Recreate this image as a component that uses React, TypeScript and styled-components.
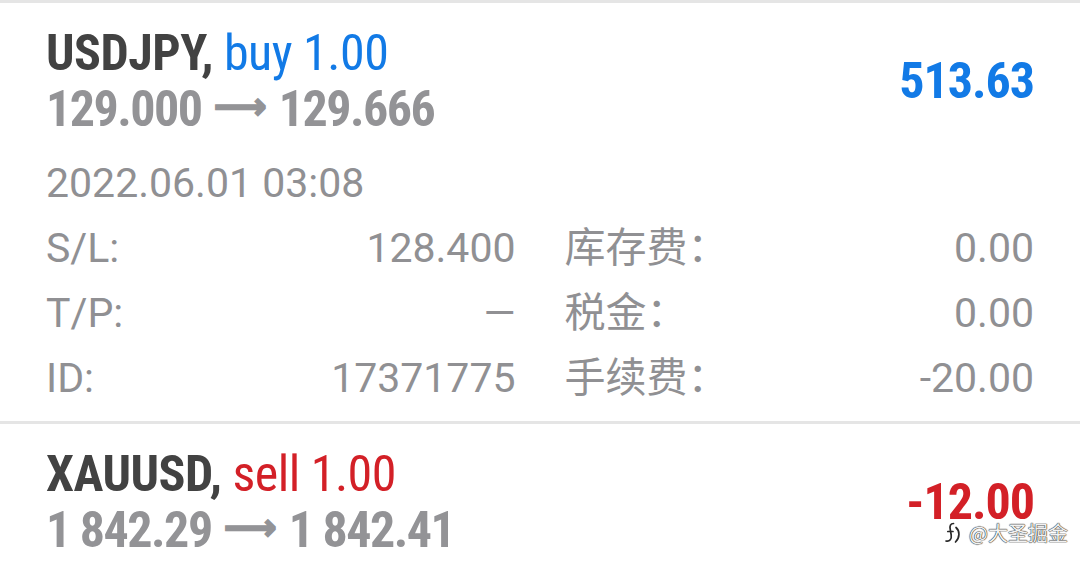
import React from "react";
import styled, { createGlobalStyle } from "styled-components";

const GlobalStyle = createGlobalStyle`
  html, body { margin: 0; padding: 0; background: #ffffff; }
  body { font-family: Roboto, "Noto Sans CJK SC", sans-serif; overflow: hidden; }
`;

const Page = styled.div`
  position: relative;
  width: 1080px;
  height: 570px;
  overflow: hidden;
  background: #ffffff;
`;

const Divider = styled.div`
  height: 3px;
  background: #e5e5e5;
`;

const Card = styled.section`
  padding: 22px 46px 10px 46px;
`;

const Header = styled.div`
  display: flex;
  align-items: center;
  justify-content: space-between;
`;

const HeaderText = styled.div`
  display: flex;
  flex-direction: column;
`;

const Condensed = styled.div`
  font-family: "Roboto Condensed", "Liberation Sans Narrow", Roboto, sans-serif;
  font-weight: 700;
  font-size: 50px;
  line-height: 56px;
  white-space: nowrap;
`;

const Title = styled(Condensed)`
  color: #424242;
  letter-spacing: -0.5px;
`;

const Side = styled.span<{ $sell?: boolean }>`
  font-weight: 400;
  color: ${(p) => (p.$sell ? "#d32027" : "#127ae6")};
`;

const Prices = styled(Condensed)`
  color: #939396;
  letter-spacing: -1.5px;
  display: flex;
  align-items: center;
`;

const Arrow = styled.span`
  font-family: "DejaVu Sans", sans-serif;
  font-weight: 700;
  font-size: 37px;
  letter-spacing: 0;
  margin: 0 12px 0 12px;
  line-height: 56px;
  position: relative;
  top: -2px;
  -webkit-text-stroke: 1.6px #939396;
`;

const Profit = styled(Condensed)<{ $neg?: boolean }>`
  letter-spacing: -1px;
  color: ${(p) => (p.$neg ? "#d32027" : "#127ae6")};
`;

const DateLine = styled.div`
  margin-top: 22px;
  font-size: 41px;
  line-height: 48px;
  color: #909093;
`;

const Details = styled.div`
  display: grid;
  grid-template-columns: 1fr 1fr;
  column-gap: 49px;
  margin-top: 9px;
`;

const Row = styled.div`
  display: flex;
  justify-content: space-between;
  align-items: baseline;
  font-size: 41px;
  line-height: 65px;
  color: #909093;
`;

const Label = styled.span``;
const Value = styled.span``;

const Watermark = styled.div`
  position: absolute;
  right: 12px;
  bottom: 25px;
  display: flex;
  align-items: center;
  gap: 7px;
  font-family: "Noto Sans CJK SC", sans-serif;
  font-size: 20px;
  line-height: 22px;
  color: #f2f2f2;
  text-shadow: 0 0 1px #333, 0 0 1px #333, 0 0 1px #333;
`;

type Detail = [string, string];

const left: Detail[] = [
  ["S/L:", "128.400"],
  ["T/P:", "—"],
  ["ID:", "17371775"],
];
const right: Detail[] = [
  ["库存费：", "0.00"],
  ["税金：", "0.00"],
  ["手续费：", "-20.00"],
];

function PriceLine({ from, to }: { from: string; to: string }) {
  return (
    <Prices>
      <span>{from}</span>
      <Arrow>⟶</Arrow>
      <span>{to}</span>
    </Prices>
  );
}

function DetailColumn({ items }: { items: Detail[] }) {
  return (
    <div>
      {items.map(([l, v]) => (
        <Row key={l}>
          <Label>{l}</Label>
          <Value>{v}</Value>
        </Row>
      ))}
    </div>
  );
}

export default function App() {
  return (
    <Page>
      <GlobalStyle />
      <Divider />
      <Card>
        <Header>
          <HeaderText>
            <Title>
              USDJPY, <Side>buy 1.00</Side>
            </Title>
            <PriceLine from="129.000" to="129.666" />
          </HeaderText>
          <Profit>513.63</Profit>
        </Header>
        <DateLine>2022.06.01 03:08</DateLine>
        <Details>
          <DetailColumn items={left} />
          <DetailColumn items={right} />
        </Details>
      </Card>
      <Divider />
      <Card>
        <Header>
          <HeaderText>
            <Title>
              XAUUSD, <Side $sell>sell 1.00</Side>
            </Title>
            <PriceLine from="1 842.29" to="1 842.41" />
          </HeaderText>
          <Profit $neg>-12.00</Profit>
        </Header>
      </Card>
      <Watermark>
        <svg width="18" height="24" viewBox="0 0 18 24" fill="none" stroke="#2a2a2a" strokeWidth="1.7" strokeLinecap="round" strokeLinejoin="round">
          <path d="M9.5 2.5C6.5 2.5 5.5 5 6.2 8.2L7.2 14C7.8 17.8 5.8 21 2 20" />
          <path d="M3.8 10.5H9" />
          <path d="M12 6.5C16 10 16 16.5 11.5 21" />
        </svg>
        <span>@大圣掘金</span>
      </Watermark>
    </Page>
  );
}
